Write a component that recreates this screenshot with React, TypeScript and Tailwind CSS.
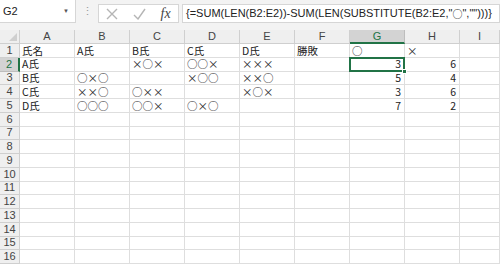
import { Fragment } from "react";

const cols = ["A", "B", "C", "D", "E", "F", "G", "H", "I"];

// 表の内容 (G, H は右寄せ)
const data: string[][] = [
  ["氏名", "A氏", "B氏", "C氏", "D氏", "勝敗", "○", "×", ""],
  ["A氏", "", "×○×", "○○×", "×××", "", "3", "6", ""],
  ["B氏", "○×○", "", "×○○", "××○", "", "5", "4", ""],
  ["C氏", "××○", "○××", "", "×○×", "", "3", "6", ""],
  ["D氏", "○○○", "○○×", "○×○", "", "", "7", "2", ""],
];

const rows = Array.from({ length: 16 }, (_, i) => i + 1);

const cjk = '"Noto Sans CJK JP", "Liberation Sans", sans-serif';

export default function App() {
  return (
    <div
      className="w-[500px] h-[265px] overflow-hidden bg-white text-[#222]"
      style={{ fontFamily: '"Liberation Sans", "Noto Sans CJK JP", sans-serif' }}
    >
      {/* 数式バー */}
      <div className="h-[30px] bg-[#f3f3f3] flex items-start">
        <div className="w-[76px] h-[23px] bg-white border-r border-b border-[#d6d6d6] flex items-center justify-between pl-[3px] pr-[6px]">
          <span className="text-[11px]">G2</span>
          <span className="text-[6px] text-[#555]">▼</span>
        </div>
        <div className="w-[22px] h-[23px] flex items-center justify-center text-[#999] text-[11px]">⋮</div>
        <div className="mt-[4px] w-[81px] h-[19px] bg-white border border-[#d6d6d6] flex items-center justify-around">
          <svg width="12" height="12" viewBox="0 0 12 12">
            <path d="M1 1 L11 11 M11 1 L1 11" stroke="#b5b5b5" strokeWidth="1.4" fill="none" />
          </svg>
          <svg width="13" height="12" viewBox="0 0 13 12">
            <path d="M1 7 L5 11 L12 1" stroke="#b5b5b5" strokeWidth="1.4" fill="none" />
          </svg>
          <span className="text-[14px] italic text-[#444]" style={{ fontFamily: '"Liberation Serif", serif' }}>fx</span>
        </div>
        <div className="mt-[4px] ml-[3px] flex-1 h-[19px] bg-white border border-[#d6d6d6] flex items-center pl-[3px] text-[11px] tracking-[0px] whitespace-nowrap overflow-hidden">
          {'{=SUM(LEN(B2:E2))-SUM(LEN(SUBSTITUTE(B2:E2,"'}
          <span style={{ fontFamily: cjk }} className="text-[10px]">○</span>
          {'","")))}'}
        </div>
      </div>

      {/* シート */}
      <div className="relative grid grid-cols-[20px_repeat(8,55px)_1fr] grid-rows-[14px_repeat(16,13.75px)]">
        <div className="bg-[#efefef] border-r border-b border-[#cfcfcf] relative">
          <div className="absolute right-[2px] bottom-[2px] w-0 h-0 border-l-[8px] border-l-transparent border-b-[8px] border-b-[#cfcfcf]" />
        </div>
        {cols.map((c) => (
          <div
            key={c}
            className={
              c === "G"
                ? "bg-[#d3d3d3] border-r border-[#bdbdbd] border-b-2 border-b-[#217346] text-[#217346] text-[11px] flex items-center justify-center"
                : "bg-[#efefef] border-r border-b border-[#cfcfcf] text-[#444] text-[11px] flex items-center justify-center"
            }
          >
            {c}
          </div>
        ))}
        {rows.map((r) => (
          <Fragment key={r}>
            <div
              className={
                r === 2
                  ? "bg-[#d3d3d3] border-r-2 border-r-[#217346] border-b border-b-[#bdbdbd] text-[#217346] text-[11px] leading-none flex items-end justify-center pb-[1px]"
                  : "bg-[#efefef] border-r border-b border-[#cfcfcf] text-[#444] text-[11px] leading-none flex items-end justify-center pb-[1px]"
              }
            >
              {r}
            </div>
            {cols.map((c, ci) => {
              const v = data[r - 1]?.[ci] ?? "";
              const num = c === "G" || c === "H";
              return (
                <div
                  key={c}
                  style={{ fontFamily: cjk }}
                  className={
                    "border-r border-b border-[#dedede] text-[10.5px] leading-none flex items-center pt-[1px] whitespace-nowrap " +
                    (num && r > 1 ? "justify-end pr-[3px]" : "pl-[2px]")
                  }
                >
                  {v}
                </div>
              );
            })}
          </Fragment>
        ))}
        {/* 選択セル G2 */}
        <div className="absolute left-[349px] top-[26.5px] w-[56px] h-[15px] border-2 border-[#217346] pointer-events-none">
          <div className="absolute right-[-4px] bottom-[-4px] w-[5px] h-[5px] bg-[#217346] border border-white" />
        </div>
      </div>
    </div>
  );
}
